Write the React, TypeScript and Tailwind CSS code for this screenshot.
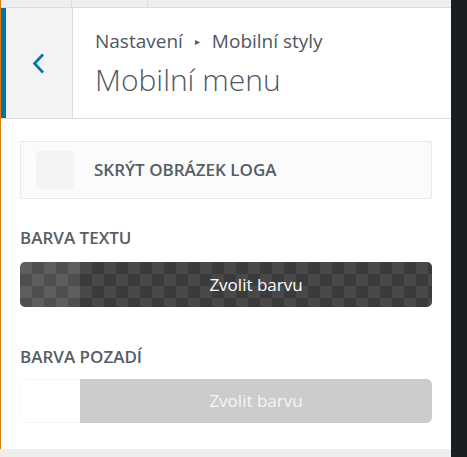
import React from "react";

const lightChecks =
  "bg-[image:repeating-conic-gradient(#4f4f4f_0%_25%,#5e5e5e_0%_50%)] bg-[length:24px_24px]";
const darkChecks =
  "bg-[image:repeating-conic-gradient(#484848_0%_25%,#3b3b3b_0%_50%)] bg-[length:24px_24px] bg-[position:12px_0]";

const Label: React.FC<{ children: React.ReactNode; className?: string }> = ({ children, className }) => (
  <div className={"text-[17px] font-semibold leading-[24px] text-[#555d65] uppercase " + (className ?? "")}>
    {children}
  </div>
);

export default function App() {
  return (
    <div
      className="flex h-[457px] w-[467px] overflow-hidden bg-white"
      style={{ fontFamily: '"Open Sans", "Noto Sans", sans-serif' }}
    >
      <div className="flex w-[451px] flex-col">
        <div className="flex flex-1 flex-col border-l border-[#e07d10]">
          {/* top strip */}
          <div className="flex h-[8px] border-b border-[#dcdcde] bg-[#eeeeee]">
            <div className="w-[71px] border-r border-[#dcdcde]" />
            <div className="w-[76px] border-r border-[#dcdcde]" />
          </div>

          {/* header */}
          <div className="flex h-[111px] border-b border-[#dcdcde]">
            <button
              type="button"
              className="flex w-[72px] shrink-0 items-center justify-center border-l-[5px] border-r border-l-[#0073aa] border-r-[#dcdcde] bg-[#f3f3f3] pr-[2px]"
            >
              <svg width="13" height="21" viewBox="0 0 13 21" fill="none">
                <path d="M11 1.5L2.5 10.5l8.5 9" stroke="#0073aa" strokeWidth="2.6" />
              </svg>
            </button>
            <div className="flex flex-col pl-[22px] pt-[20px]">
              <div className="flex items-center text-[19px] leading-[26px] text-[#50575e]">
                <span>Nastavení</span>
                <span className="mx-[12px] text-[10px] leading-none">▸</span>
                <span>Mobilní styly</span>
              </div>
              <div className="mt-[6px] text-[30px] font-light leading-[40px] text-[#50575e]">Mobilní menu</div>
            </div>
          </div>

          {/* content */}
          <div className="flex flex-col px-[19px] pr-[19px]">
            <div className="mt-[22px] flex h-[58px] items-center rounded-[2px] border border-[#e8e8e8] bg-[#fbfbfb] pl-[15px]">
              <div className="h-[38px] w-[38px] rounded-[5px] bg-[#f3f3f3]" />
              <div className="ml-[20px] text-[17px] font-semibold leading-[24px] text-[#555d65]">
                SKRÝT OBRÁZEK LOGA
              </div>
            </div>

            <Label className="mt-[27px]">Barva textu</Label>
            <div className="mt-[12px] flex h-[45px] overflow-hidden rounded-[5px]">
              <div className={"w-[60px] " + lightChecks} />
              <div
                className={
                  "flex flex-1 items-center justify-center text-[17px] text-white " + darkChecks
                }
              >
                Zvolit barvu
              </div>
            </div>

            <Label className="mt-[38px]">Barva pozadí</Label>
            <div className="mt-[10px] flex h-[44px] overflow-hidden rounded-[5px]">
              <div className="w-[60px] rounded-l-[5px] border border-r-0 border-[#f6f6f6] bg-white" />
              <div className="flex flex-1 items-center justify-center rounded-r-[5px] bg-[#cccccc] text-[17px] text-[#f6f6f6]">
                Zvolit barvu
              </div>
            </div>
          </div>
        </div>
        <div className="h-[8px] bg-[#eeeeee]" />
      </div>
      <div className="w-[16px] bg-[#191e23]" />
    </div>
  );
}
